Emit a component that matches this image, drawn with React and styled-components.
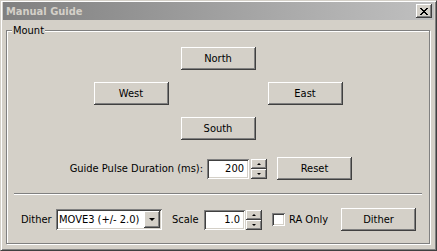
import React from "react";
import styled, { createGlobalStyle } from "styled-components";

const face = "#d4d0c8";
const shadow = "#808080";
const dark = "#404040";

const GlobalStyle = createGlobalStyle`
  html, body {
    margin: 0;
    padding: 0;
    background: ${face};
  }
  body {
    font-family: "DejaVu Sans Condensed", "Liberation Sans", sans-serif;
    font-size: 11px;
    color: #000;
  }
`;

const raised = `
  box-shadow: inset -1px -1px 0 ${dark}, inset 1px 1px 0 #fff,
    inset -2px -2px 0 ${shadow}, inset 2px 2px 0 ${face};
`;

const sunken = `
  box-shadow: inset 1px 1px 0 ${shadow}, inset -1px -1px 0 #fff,
    inset 2px 2px 0 ${dark}, inset -2px -2px 0 ${face};
`;

const Window = styled.div`
  width: 437px;
  height: 251px;
  box-sizing: border-box;
  display: flex;
  flex-direction: column;
  background: ${face};
  border-top: 1px solid ${face};
  border-left: 1px solid ${face};
  border-right: 1px solid ${dark};
  border-bottom: 1px solid ${dark};
  box-shadow: inset 1px 1px 0 #fff, inset -1px -1px 0 ${shadow};
  padding: 1px 2px 2px 2px;
`;

const TitleBar = styled.div`
  height: 18px;
  display: flex;
  align-items: center;
  justify-content: space-between;
  padding: 0 2px 0 3px;
  background: linear-gradient(to right, #808080, #c0c0c0);
`;

const Title = styled.span`
  font-weight: bold;
  color: ${face};
  font-size: 11px;
`;

const CloseButton = styled.button`
  width: 16px;
  height: 14px;
  padding: 0;
  border: none;
  background: ${face};
  ${raised}
  display: flex;
  align-items: center;
  justify-content: center;
`;

const Body = styled.div`
  flex: 1;
  display: flex;
  padding: 10px 3px 3px 3px;
`;

const GroupBox = styled.div`
  position: relative;
  flex: 1;
  display: flex;
  flex-direction: column;
  border: 1px solid ${shadow};
  box-shadow: inset 1px 1px 0 #fff, 1px 1px 0 #fff;
  margin-right: 1px;
  margin-bottom: 1px;
`;

const Legend = styled.span`
  position: absolute;
  top: -7px;
  left: 5px;
  padding: 0 1px;
  line-height: 13px;
  background: ${face};
`;

const Compass = styled.div`
  display: grid;
  grid-template-columns: repeat(3, 75px);
  grid-template-rows: repeat(3, 23px);
  gap: 12px;
  justify-content: center;
  margin-top: 16px;
`;

const Button = styled.button`
  width: 75px;
  height: 23px;
  padding: 0;
  border: none;
  background: ${face};
  font: inherit;
  color: #000;
  ${raised}
  grid-column: ${(p) => p.$col || "auto"};
  grid-row: ${(p) => p.$row || "auto"};
`;

const Row = styled.div`
  display: flex;
  align-items: center;
  height: 23px;
  margin-top: ${(p) => p.$top}px;
  padding-left: ${(p) => p.$left || 0}px;
`;

const Label = styled.span`
  flex: 0 0 ${(p) => p.$w}px;
  text-align: ${(p) => p.$align || "left"};
  white-space: nowrap;
`;

const TextBox = styled.div`
  width: ${(p) => p.$w}px;
  height: 20px;
  box-sizing: border-box;
  background: #fff;
  ${sunken}
  display: flex;
  align-items: center;
  justify-content: flex-end;
  padding-right: 5px;
`;

const Spinner = styled.div`
  width: 16px;
  height: 20px;
  display: flex;
  flex-direction: column;
  margin-left: ${(p) => p.$gap}px;
`;

const SpinHalf = styled.div`
  flex: 1;
  background: ${face};
  ${raised}
  display: flex;
  align-items: center;
  justify-content: center;
`;

const Arrow = styled.span`
  width: 0;
  height: 0;
  border-left: ${(p) => p.$size}px solid transparent;
  border-right: ${(p) => p.$size}px solid transparent;
  ${(p) => (p.$up ? "border-bottom" : "border-top")}: ${(p) => p.$size}px solid #000;
`;

const Separator = styled.div`
  height: 0;
  margin: 13px 7px 0 7px;
  border-top: 1px solid ${shadow};
  border-bottom: 1px solid #fff;
`;

const Combo = styled.div`
  width: 106px;
  height: 21px;
  box-sizing: border-box;
  background: #fff;
  ${sunken}
  padding: 2px;
  display: flex;
  align-items: center;
`;

const ComboText = styled.span`
  flex: 1;
  padding-left: 1px;
  white-space: nowrap;
`;

const ComboButton = styled.div`
  width: 16px;
  align-self: stretch;
  background: ${face};
  ${raised}
  display: flex;
  align-items: center;
  justify-content: center;
`;

const CheckBox = styled.div`
  width: 13px;
  height: 13px;
  box-sizing: border-box;
  background: #fff;
  ${sunken}
  margin-left: 10px;
  margin-right: 4px;
`;

const Spin = ({ gap }) => (
  <Spinner $gap={gap}>
    <SpinHalf>
      <Arrow $up $size={2} />
    </SpinHalf>
    <SpinHalf>
      <Arrow $size={2} />
    </SpinHalf>
  </Spinner>
);

export default function App() {
  return (
    <>
      <GlobalStyle />
      <Window>
        <TitleBar>
          <Title>Manual Guide</Title>
          <CloseButton>
            <svg width="8" height="7" viewBox="0 0 8 7" shapeRendering="crispEdges">
              <path
                d="M0 0h2v1h-2zM6 0h2v1h-2zM1 1h2v1h-2zM5 1h2v1h-2zM2 2h4v1h-4zM3 3h2v1h-2zM2 4h4v1h-4zM1 5h2v1h-2zM5 5h2v1h-2zM0 6h2v1h-2zM6 6h2v1h-2z"
                fill="#000"
              />
            </svg>
          </CloseButton>
        </TitleBar>
        <Body>
          <GroupBox>
            <Legend>Mount</Legend>
            <Compass>
              <Button $col={2} $row={1}>North</Button>
              <Button $col={1} $row={2}>West</Button>
              <Button $col={3} $row={2}>East</Button>
              <Button $col={2} $row={3}>South</Button>
            </Compass>
            <Row $top={17}>
              <Label $w={196} $align="right">Guide Pulse Duration (ms):</Label>
              <TextBox $w={42} style={{ marginLeft: 4 }}>200</TextBox>
              <Spin gap={2} />
              <Button style={{ marginLeft: 10 }}>Reset</Button>
            </Row>
            <Separator />
            <Row $top={13} $left={14}>
              <Label $w={35}>Dither</Label>
              <Combo>
                <ComboText>MOVE3 (+/- 2.0)</ComboText>
                <ComboButton>
                  <Arrow $size={3.5} />
                </ComboButton>
              </Combo>
              <Label $w={32} style={{ marginLeft: 10 }}>Scale</Label>
              <TextBox $w={41}>1.0</TextBox>
              <Spin gap={1} />
              <CheckBox />
              <Label $w={52}>RA Only</Label>
              <Button>Dither</Button>
            </Row>
          </GroupBox>
        </Body>
      </Window>
    </>
  );
}
